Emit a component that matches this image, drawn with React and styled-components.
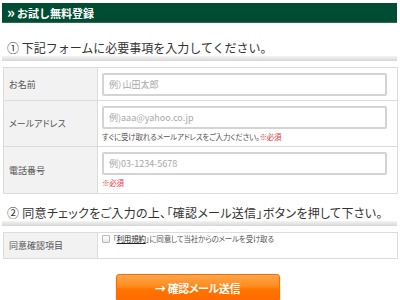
import React from "react";
import styled, { createGlobalStyle } from "styled-components";

const GlobalStyle = createGlobalStyle`
  html, body {
    margin: 0;
    padding: 0;
    background: #ffffff;
  }
  body {
    font-family: "Noto Sans CJK JP", "Noto Sans", sans-serif;
    color: #333;
  }
`;

const Page = styled.div`
  width: 400px;
  height: 300px;
  overflow: hidden;
  padding: 3px 3px 0 2px;
  box-sizing: border-box;
`;

const Header = styled.div`
  height: 19px;
  background: #004d33;
  border-bottom: 1px solid #2e6b52;
  display: flex;
  align-items: center;
  padding-left: 5px;
  color: #fff;
  font-size: 11px;
  font-weight: bold;
  gap: 3px;
`;

const Chevron = styled.span`
  font-size: 15px;
  line-height: 1;
  margin-top: -2px;
  letter-spacing: -1px;
`;

const SectionTitle = styled.h2`
  margin: ${(p) => p.$top}px 0 6px;
  padding: 0 0 5px 5px;
  font-size: 12px;
  font-weight: normal;
  color: #333;
  line-height: 16px;
  white-space: nowrap;
  font-feature-settings: ${(p) => (p.$tight ? '"palt"' : "normal")};
  letter-spacing: ${(p) => (p.$tight ? "0.3px" : "0")};
  background: linear-gradient(
    to bottom,
    transparent calc(100% - 5px),
    #f4f4f4 calc(100% - 5px),
    #d6d6d6 100%
  );
`;

const Table = styled.table`
  width: 100%;
  border-collapse: collapse;
  border: 1px solid #dcdcdc;
  margin-left: 1px;
`;

const Label = styled.th`
  width: 88px;
  background: #f2f2f2;
  border: 1px solid #dcdcdc;
  text-align: left;
  font-weight: normal;
  font-size: 9px;
  color: #555;
  padding: 0 0 0 5px;
  height: ${(p) => p.$h}px;
  font-feature-settings: "palt";
`;

const Cell = styled.td`
  border: 1px solid #dcdcdc;
  padding: ${(p) => p.$pad || "5px 10px 3px 4px"};
  vertical-align: top;
`;

const Input = styled.input`
  display: block;
  width: 100%;
  height: 23px;
  box-sizing: border-box;
  border: 2px solid #d4d4d4;
  border-radius: 2px;
  padding: 0 5px;
  font-family: inherit;
  font-size: 9px;
  color: #333;
  font-feature-settings: "palt";
  &::placeholder {
    color: #a8a8a8;
  }
`;

const Note = styled.div`
  font-size: 7.5px;
  line-height: 10px;
  color: #555;
  margin-top: 3px;
  font-feature-settings: "palt";
  letter-spacing: -0.2px;
`;

const Required = styled.span`
  color: #f23030;
`;

const Agree = styled.label`
  display: flex;
  align-items: center;
  font-size: 7.5px;
  color: #555;
  font-feature-settings: "palt";
  letter-spacing: -0.2px;
`;

const Check = styled.span`
  width: 6px;
  height: 6px;
  border: 1px solid #b8b8b8;
  border-radius: 1px;
  background: linear-gradient(#fff, #e8e8e8);
  margin-right: 3px;
`;

const TermsLink = styled.a`
  color: #222;
  text-decoration: underline;
`;

const ButtonRow = styled.div`
  display: flex;
  justify-content: center;
  margin-top: 15px;
  padding-right: 4px;
`;

const SubmitButton = styled.button`
  width: 164px;
  height: 28px;
  border: 1px solid #f07000;
  border-radius: 3px;
  background: linear-gradient(
    to bottom,
    #ffa64d 0%,
    #ff8a1a 45%,
    #ff7400 55%,
    #ff6a00 100%
  );
  box-shadow: 0 1px 2px rgba(0, 0, 0, 0.25);
  color: #fff;
  font-family: inherit;
  font-size: 11px;
  font-weight: bold;
  letter-spacing: -0.4px;
  font-feature-settings: "palt";
  display: flex;
  align-items: center;
  justify-content: center;
  gap: 4px;
  cursor: pointer;
`;

export default function App() {
  return (
    <>
      <GlobalStyle />
      <Page>
        <Header>
          <Chevron>»</Chevron>
          お試し無料登録
        </Header>

        <SectionTitle $top={17}>① 下記フォームに必要事項を入力してください。</SectionTitle>
        <Table>
          <tbody>
            <tr>
              <Label $h={32}>お名前</Label>
              <Cell>
                <Input placeholder="例）山田太郎" />
              </Cell>
            </tr>
            <tr>
              <Label $h={45}>メールアドレス</Label>
              <Cell>
                <Input placeholder="例)aaa@yahoo.co.jp" />
                <Note>
                  すぐに受け取れるメールアドレスをご入力ください。<Required>※必須</Required>
                </Note>
              </Cell>
            </tr>
            <tr>
              <Label $h={46}>電話番号</Label>
              <Cell>
                <Input placeholder="例)03-1234-5678" />
                <Note>
                  <Required>※必須</Required>
                </Note>
              </Cell>
            </tr>
          </tbody>
        </Table>

        <SectionTitle $top={11} $tight>
          ② 同意チェックをご入力の上、「確認メール送信」ボタンを押して下さい。
        </SectionTitle>
        <Table>
          <tbody>
            <tr>
              <Label $h={25}>同意確認項目</Label>
              <Cell $pad="0 4px">
                <Agree>
                  <Check />
                  <span>
                    「<TermsLink>利用規約</TermsLink>」に同意して当社からのメールを受け取る
                  </span>
                </Agree>
              </Cell>
            </tr>
          </tbody>
        </Table>

        <ButtonRow>
          <SubmitButton>→ 確認メール送信</SubmitButton>
        </ButtonRow>
      </Page>
    </>
  );
}
